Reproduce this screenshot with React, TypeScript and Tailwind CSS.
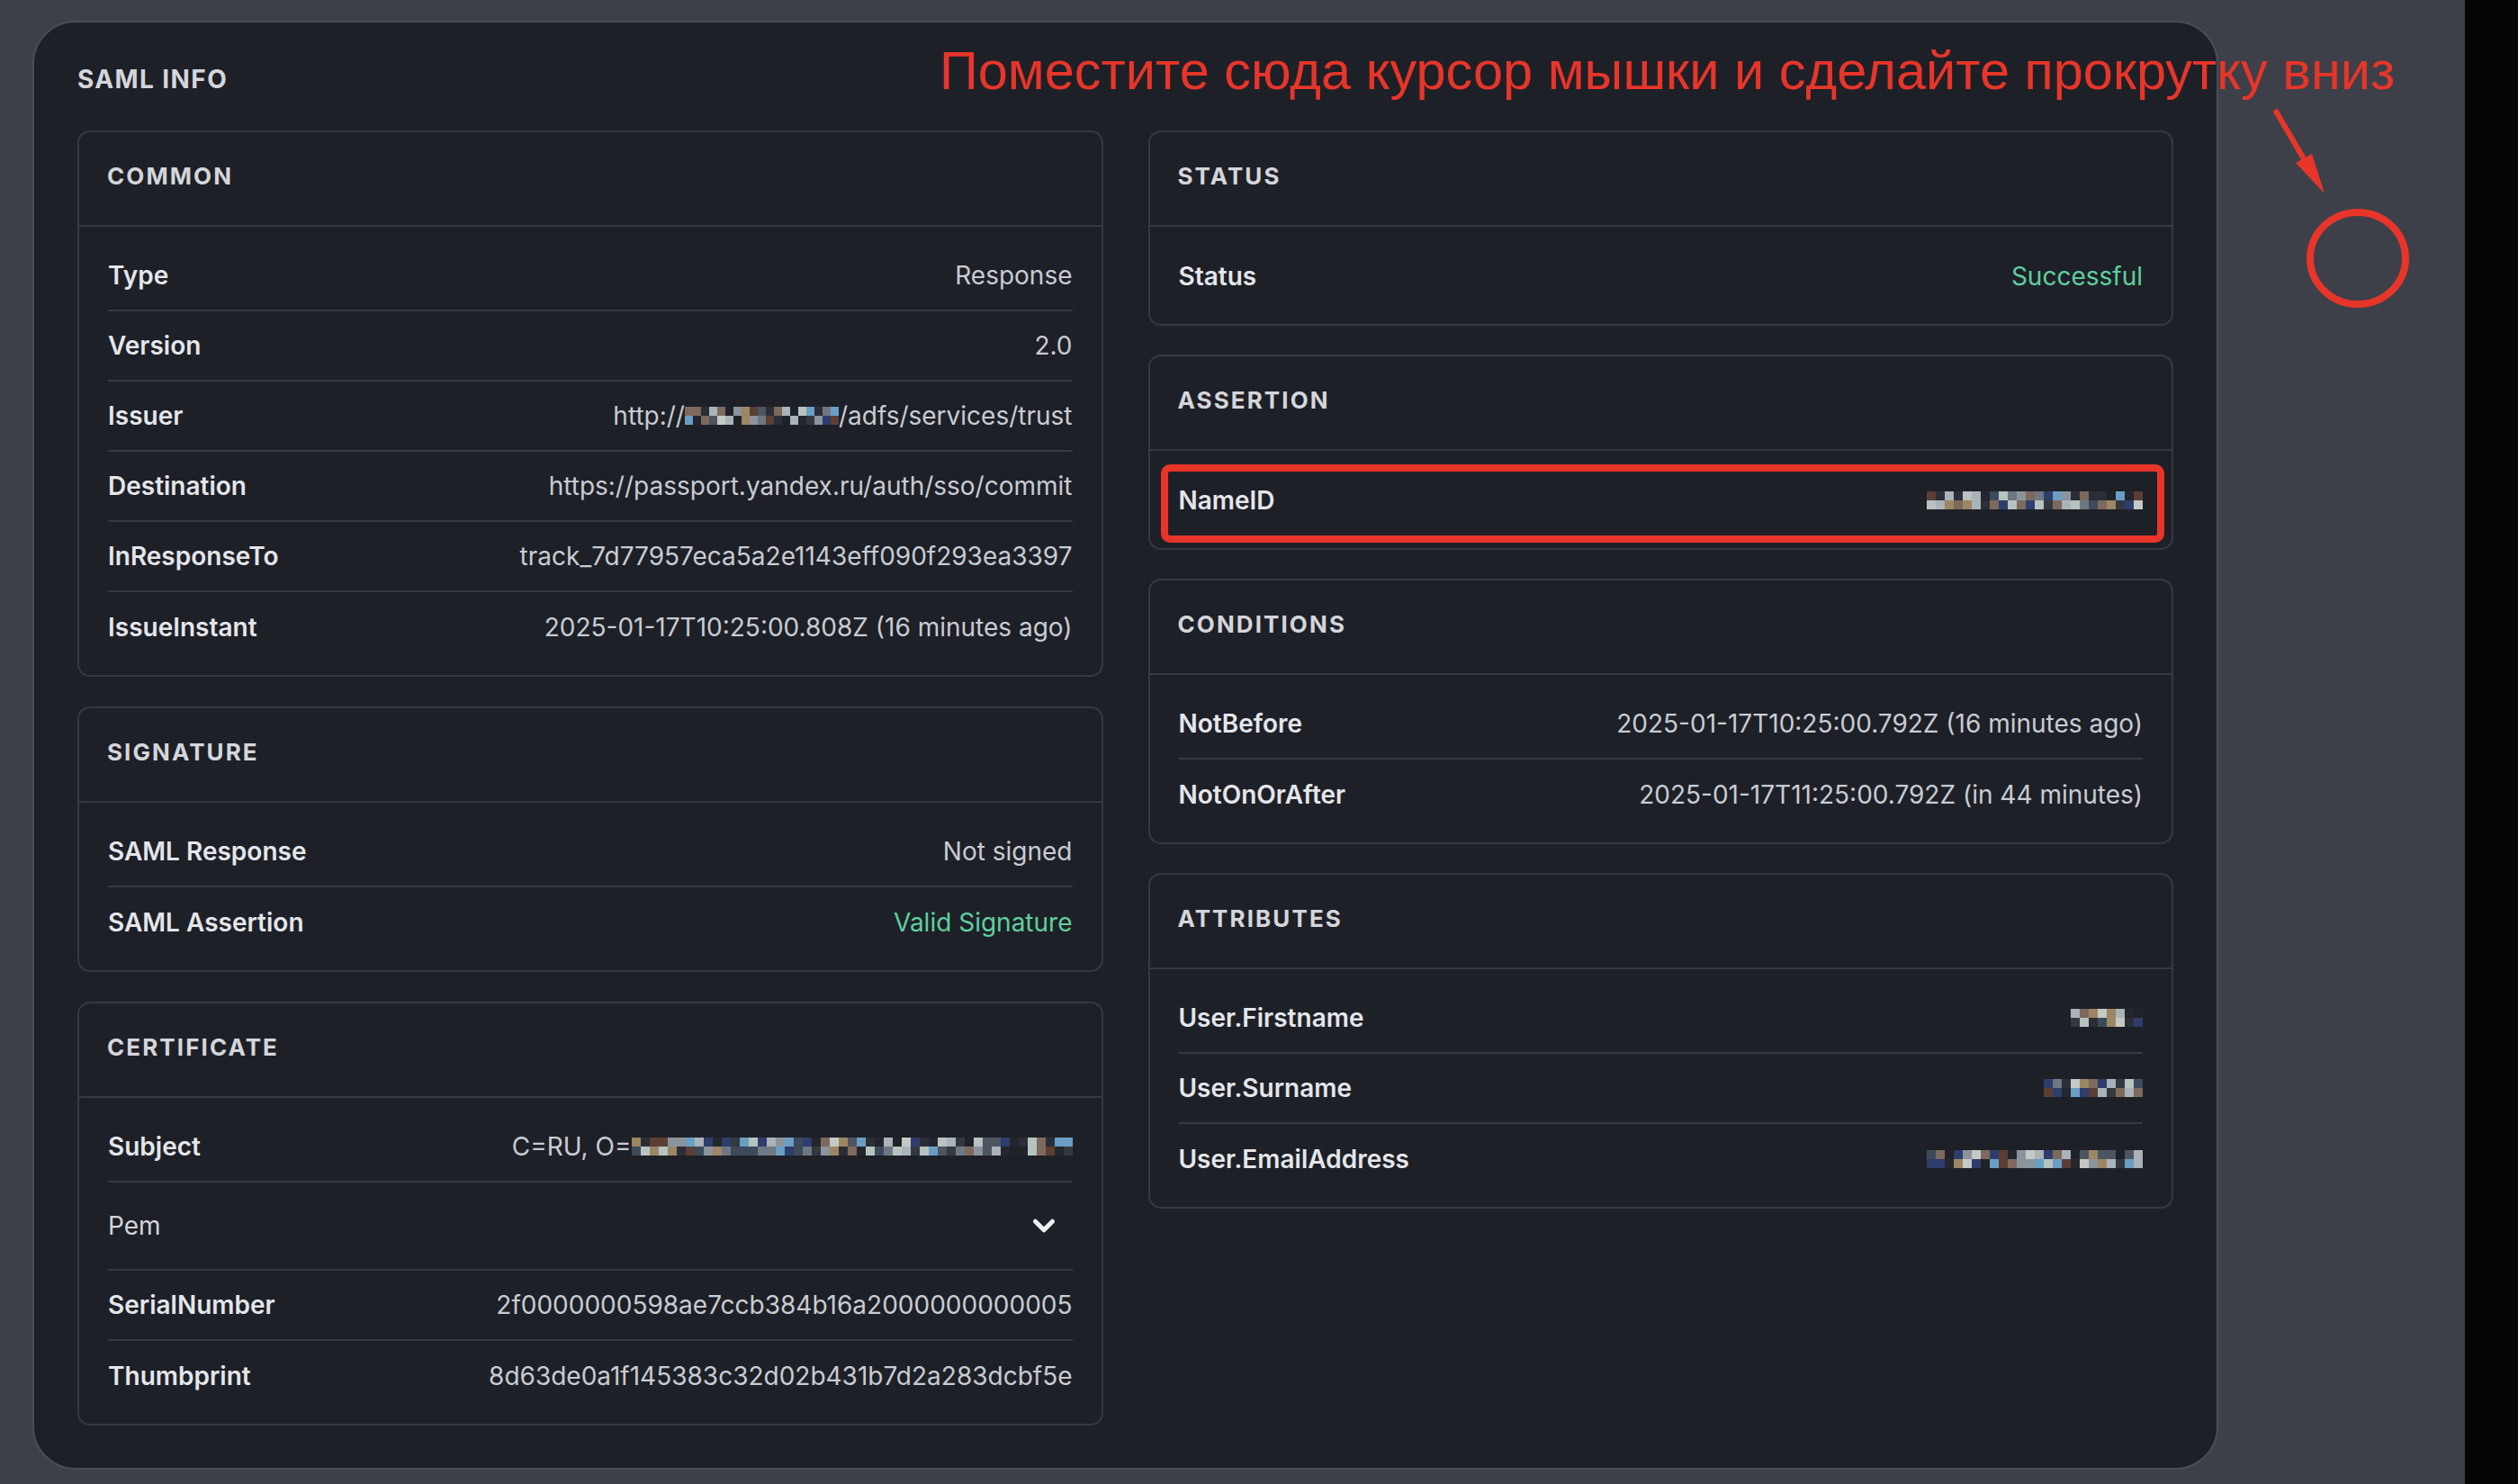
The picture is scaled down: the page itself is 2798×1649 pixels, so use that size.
import { ChevronDown } from "lucide-react";
import type { ReactNode } from "react";

/* ─────────────────────────────────────────
   MOSAIC (blurred / pixelated private data)
───────────────────────────────────────── */
const PALETTE = [
  "#23262e", "#2b2e36", "#1f2229", "#4d5560", "#6a9ec4", "#8b949d",
  "#a9b3b8", "#b6c3bf", "#9c8664", "#5b3e34", "#2e3d6b", "#6f7782",
  "#3c4a5a", "#c4c9c6", "#7d6a5c", "#33383f",
];

function Mosaic({
  cols,
  seed,
  cell = 10,
  rows = 2,
}: {
  cols: number;
  seed: number;
  cell?: number;
  rows?: number;
}) {
  let s = seed;
  const rand = () => {
    s = (s * 9301 + 49297) % 233280;
    return s / 233280;
  };
  const grid = Array.from({ length: rows }, () =>
    Array.from({ length: cols }, () => PALETTE[Math.floor(rand() * PALETTE.length)]),
  );
  return (
    <span className="inline-flex flex-col align-middle">
      {grid.map((row, r) => (
        <span key={r} className="flex">
          {row.map((c, i) => (
            <span
              key={i}
              style={{ width: cell, height: 10, background: c }}
              className="block"
            />
          ))}
        </span>
      ))}
    </span>
  );
}

/* ─────────────────────────────────────────
   SECTION + ROW
───────────────────────────────────────── */
function Section({ title, children }: { title: string; children: ReactNode }) {
  return (
    <div className="rounded-[14px] border-2 border-[#363942]">
      <div className="flex h-[105px] items-center border-b-2 border-[#363942] px-[31px] pb-[6px]">
        <span className="text-[26px] font-bold tracking-[0.08em] text-[#d4d6db]">
          {title}
        </span>
      </div>
      <div className="px-[32px] pb-[14px] pt-[16px]">{children}</div>
    </div>
  );
}

function Row({
  label,
  value,
  green,
  last,
}: {
  label: string;
  value: ReactNode;
  green?: boolean;
  last?: boolean;
}) {
  return (
    <div
      className={`flex h-[78px] items-center justify-between ${
        last ? "" : "border-b-2 border-[#363942]"
      }`}
    >
      <span className="text-[28px] font-semibold text-[#e4e6ea]">{label}</span>
      <span
        className={`flex items-center text-[28px] ${
          green ? "text-[#5fcf9f]" : "text-[#c9ccd2]"
        }`}
      >
        {value}
      </span>
    </div>
  );
}

/* ─────────────────────────────────────────
   MAIN
───────────────────────────────────────── */
export default function App() {
  return (
    <div
      className="relative flex h-[1649px] w-[2798px] overflow-hidden bg-[#3d4048]"
      style={{ fontFamily: "Inter, 'Noto Sans', sans-serif" }}
    >
      <div className="flex-1 pl-[36px] pt-[23px]">
        <div className="w-[2429px] rounded-[48px] border-2 border-[#4a4d56] bg-[#1e2027] px-[48px] pb-[47px] pt-[45px]">
          <h1 className="mb-[39px] h-[36px] text-[28px] font-bold leading-[36px] tracking-[0.05em] text-[#d4d6db]">
            SAML INFO
          </h1>

          <div className="grid grid-cols-2 gap-[50px]">
            {/* left column */}
            <div className="flex flex-col gap-[33px]">
              <Section title="COMMON">
                <Row label="Type" value="Response" />
                <Row label="Version" value="2.0" />
                <Row
                  label="Issuer"
                  value={
                    <>
                      http://
                      <Mosaic cols={19} cell={9} seed={17} />
                      /adfs/services/trust
                    </>
                  }
                />
                <Row
                  label="Destination"
                  value="https://passport.yandex.ru/auth/sso/commit"
                />
                <Row
                  label="InResponseTo"
                  value="track_7d77957eca5a2e1143eff090f293ea3397"
                />
                <Row
                  label="IssueInstant"
                  value="2025-01-17T10:25:00.808Z (16 minutes ago)"
                  last
                />
              </Section>

              <Section title="SIGNATURE">
                <Row label="SAML Response" value="Not signed" />
                <Row label="SAML Assertion" value="Valid Signature" green last />
              </Section>

              <Section title="CERTIFICATE">
                <Row
                  label="Subject"
                  value={
                    <>
                      C=RU, O=
                      <Mosaic cols={49} seed={83} />
                    </>
                  }
                />
                <div className="flex h-[98px] items-center justify-between border-b-2 border-[#363942]">
                  <span className="text-[28px] text-[#d4d6db]">Pem</span>
                  <ChevronDown
                    size={38}
                    strokeWidth={3.2}
                    className="mr-[13px] text-[#eceef1]"
                  />
                </div>
                <Row
                  label="SerialNumber"
                  value="2f0000000598ae7ccb384b16a2000000000005"
                />
                <Row
                  label="Thumbprint"
                  value="8d63de0a1f145383c32d02b431b7d2a283dcbf5e"
                  last
                />
              </Section>
            </div>

            {/* right column */}
            <div className="flex flex-col gap-[32px]">
              <Section title="STATUS">
                <Row label="Status" value="Successful" green last />
              </Section>

              <Section title="ASSERTION">
                <Row label="NameID" value={<Mosaic cols={24} seed={211} />} last />
              </Section>

              <Section title="CONDITIONS">
                <Row
                  label="NotBefore"
                  value="2025-01-17T10:25:00.792Z (16 minutes ago)"
                />
                <Row
                  label="NotOnOrAfter"
                  value="2025-01-17T11:25:00.792Z (in 44 minutes)"
                  last
                />
              </Section>

              <Section title="ATTRIBUTES">
                <Row label="User.Firstname" value={<Mosaic cols={8} seed={5} />} />
                <Row label="User.Surname" value={<Mosaic cols={11} seed={61} />} />
                <Row
                  label="User.EmailAddress"
                  value={<Mosaic cols={24} seed={139} />}
                  last
                />
              </Section>
            </div>
          </div>
        </div>
      </div>

      <div className="w-[59px] bg-[#050506]" />

      {/* annotation: text */}
      <div
        className="absolute left-[1044px] top-[49px] whitespace-nowrap text-[59.5px] leading-[60px] text-[#e8352a]"
        style={{ fontFamily: "'Liberation Sans', Arial, sans-serif" }}
      >
        Поместите сюда курсор мышки и сделайте прокрутку вниз
      </div>

      {/* annotation: box around NameID */}
      <div className="absolute left-[1290px] top-[516px] h-[87px] w-[1115px] rounded-[10px] border-[8px] border-[#e8352a]" />

      {/* annotation: arrow + circle */}
      <svg
        className="absolute left-0 top-0"
        width={2798}
        height={1649}
        viewBox="0 0 2798 1649"
        fill="none"
      >
        <line x1={2528} y1={122} x2={2562} y2={180} stroke="#e8352a" strokeWidth={6} />
        <polygon points="2569,171 2551,181 2583,215" fill="#e8352a" />
        <ellipse cx={2620} cy={287} rx={53} ry={51} stroke="#e8352a" strokeWidth={8} />
      </svg>
    </div>
  );
}
